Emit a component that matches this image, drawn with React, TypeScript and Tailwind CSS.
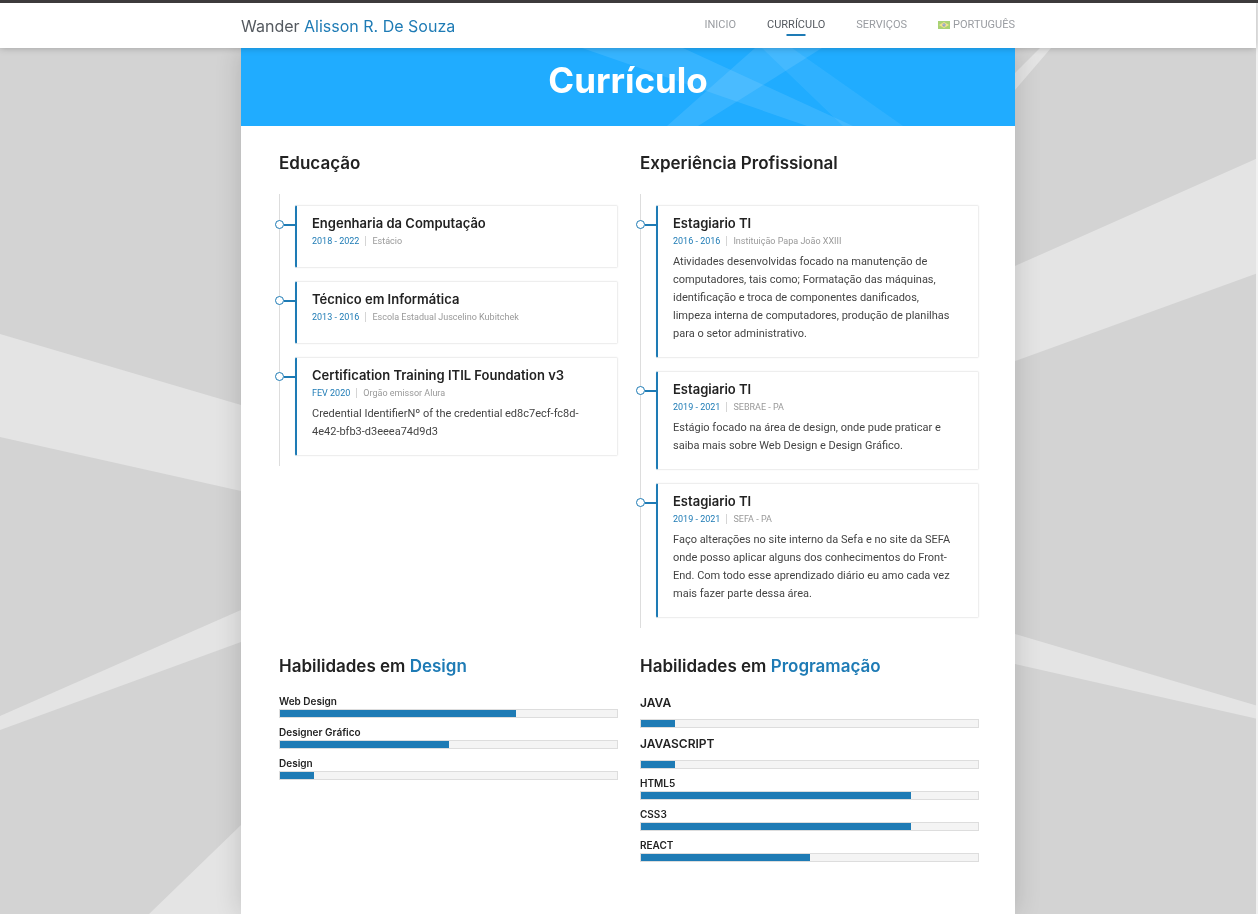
import type { ReactNode } from "react";

type Entry = { title: string; period: string; place: string; text?: string };
type Skill = { name: string; level: number; large?: boolean };

const education: Entry[] = [
  { title: "Engenharia da Computação", period: "2018 - 2022", place: "Estácio" },
  { title: "Técnico em Informática", period: "2013 - 2016", place: "Escola Estadual Juscelino Kubitchek" },
  {
    title: "Certification Training ITIL Foundation v3",
    period: "FEV 2020",
    place: "Orgão emissor Alura",
    text: "Credential IdentifierNº of the credential ed8c7ecf-fc8d-4e42-bfb3-d3eeea74d9d3",
  },
];

const experience: Entry[] = [
  {
    title: "Estagiario TI",
    period: "2016 - 2016",
    place: "Instituição Papa João XXIII",
    text: "Atividades desenvolvidas focado na manutenção de computadores, tais como; Formatação das máquinas, identificação e troca de componentes danificados, limpeza interna de computadores, produção de planilhas para o setor administrativo.",
  },
  {
    title: "Estagiario TI",
    period: "2019 - 2021",
    place: "SEBRAE - PA",
    text: "Estágio focado na área de design, onde pude praticar e saiba mais sobre Web Design e Design Gráfico.",
  },
  {
    title: "Estagiario TI",
    period: "2019 - 2021",
    place: "SEFA - PA",
    text: "Faço alterações no site interno da Sefa e no site da SEFA onde posso aplicar alguns dos conhecimentos do Front-End. Com todo esse aprendizado diário eu amo cada vez mais fazer parte dessa área.",
  },
];

const designSkills: Skill[] = [
  { name: "Web Design", level: 70 },
  { name: "Designer Gráfico", level: 50 },
  { name: "Design", level: 10 },
];

const codeSkills: Skill[] = [
  { name: "JAVA", level: 10, large: true },
  { name: "JAVASCRIPT", level: 10, large: true },
  { name: "HTML5", level: 80 },
  { name: "CSS3", level: 80 },
  { name: "REACT", level: 50 },
];

function Backdrop() {
  return (
    <svg
      className="fixed inset-0 -z-10 h-full w-full"
      viewBox="0 0 1258 914"
      preserveAspectRatio="none"
      aria-hidden="true"
    >
      <rect width="1258" height="914" fill="#d3d3d3" />
      <g fill="#e4e4e4">
        <polygon points="0,334 241,405 241,491 0,437" />
        <polygon points="0,716 241,610 241,642 0,730" />
        <polygon points="149,914 241,825 241,914" />
        <polygon points="1015,73 1040,48 1051,48 1015,90" />
        <polygon points="1015,266 1258,158 1258,273 1015,361" />
        <polygon points="1015,634 1258,706 1258,719 1015,664" />
      </g>
    </svg>
  );
}

function BrazilFlag() {
  return (
    <svg className="h-2 w-3" viewBox="0 0 12 8" aria-hidden="true">
      <rect width="12" height="8" fill="#a9d275" />
      <path d="M6 1 11 4 6 7 1 4Z" fill="#f3e48c" />
      <circle cx="6" cy="4" r="1.7" fill="#8f9fc0" />
      <path d="M4.5 3.6Q6 3.2 7.5 4.5" stroke="#e3e8ee" strokeWidth=".4" fill="none" />
    </svg>
  );
}

function Heading({ children }: { children: ReactNode }) {
  return <h2 className="font-[Inter,sans-serif] text-[17px] leading-6 font-semibold text-[#222]">{children}</h2>;
}

function Timeline({ title, entries }: { title: string; entries: Entry[] }) {
  return (
    <section>
      <Heading>{title}</Heading>
      <ol className="mt-[19px] flex flex-col gap-[13px] border-l border-[#ddd] pt-[11px] pb-[10px] pl-[15px]">
        {entries.map((e) => (
          <li
            key={e.period + e.place}
            className="relative rounded-[2px] border border-l-2 border-[#eee] border-l-[#1e7bb5] pt-[7px] pr-5 pb-[14px] pl-[15px] shadow-[0_0_2px_rgba(0,0,0,0.06)]"
          >
            <span className="absolute top-[14px] -left-[22px] flex items-center" aria-hidden="true">
              <span className="size-[9px] rounded-full border border-[#1e7bb5] bg-white" />
              <span className="h-[2px] w-[11px] bg-[#1e7bb5]" />
            </span>
            <h3 className="font-[Inter,sans-serif] text-[13px] leading-5 font-semibold text-[#222]">{e.title}</h3>
            <p className="mt-px flex h-[14px] items-center text-[9px] leading-[14px]">
              <span className="text-[#1e7bb5]">{e.period}</span>
              <span className="mx-[6px] h-[10px] w-px bg-[#d5d5d5]" />
              <span className="text-[#999]">{e.place}</span>
            </p>
            <p className="mt-[5px] text-[11px] leading-[18px] text-[#444]">{e.text}</p>
          </li>
        ))}
      </ol>
    </section>
  );
}

function Skills({ topic, skills }: { topic: string; skills: Skill[] }) {
  return (
    <section>
      <Heading>
        Habilidades em <span className="text-[#1e7bb5]">{topic}</span>
      </Heading>
      <ul className="mt-[17px] flex flex-col gap-2">
        {skills.map((s) => (
          <li key={s.name}>
            <h3
              className={
                s.large
                  ? "mb-2 font-[Inter,sans-serif] text-xs leading-4 font-semibold text-[#222]"
                  : "mb-[2px] font-[Inter,sans-serif] text-[10px] leading-3 font-semibold text-[#222]"
              }
            >
              {s.name}
            </h3>
            <div
              role="progressbar"
              aria-label={s.name}
              aria-valuenow={s.level}
              className="h-[9px] border border-[#ddd] bg-[#f4f4f4]"
            >
              <div className="h-full bg-[#1e7bb5]" style={{ width: `${s.level}%` }} />
            </div>
          </li>
        ))}
      </ul>
    </section>
  );
}

export default function App() {
  return (
    <div className="relative isolate flex min-h-screen flex-col font-[Roboto,sans-serif]">
      <Backdrop />
      <div className="relative z-20 h-[3px] bg-[#3d3b3c]" />
      <div className="flex grow flex-col border-r-2 border-[#f1f1f1]">
        <header className="relative z-10 bg-white shadow-[0_0_7px_rgba(0,0,0,0.25)]">
          <div className="mx-auto flex h-[45px] max-w-[774px] items-center justify-between">
            <a href="#inicio" className="font-[Inter,sans-serif] text-base leading-6 text-[#54595f]">
              Wander <span className="text-[#1e7bb5]">Alisson R. De Souza</span>
            </a>
            <nav className="flex items-center gap-[31px] pb-px text-[11px] leading-4 text-[#999ca1]">
              <a href="#inicio">INICIO</a>
              <a href="#curriculo" aria-current="page" className="relative text-[#54595f]">
                CURRÍCULO
                <span className="absolute top-[17px] left-1/2 h-[2px] w-[19px] -translate-x-1/2 bg-[#1e7bb5]" />
              </a>
              <a href="#servicos">SERVIÇOS</a>
              <a href="#idioma" className="flex items-center gap-[3px]">
                <BrazilFlag />
                PORTUGUÊS
              </a>
            </nav>
          </div>
        </header>
        <main className="mx-auto w-full max-w-[774px] grow bg-white shadow-[0_0_25px_rgba(0,0,0,0.16)]">
          <div className="relative flex h-[78px] justify-center bg-[#20acff] pt-3">
            <svg
              className="absolute inset-0 h-full w-full"
              viewBox="0 0 774 78"
              preserveAspectRatio="none"
              aria-hidden="true"
            >
              <g fill="#fff" fillOpacity=".1">
                <polygon points="341,0 442,0 612,78 566,78" />
                <polygon points="426,78 514,0 581,0 457,78" />
                <polygon points="521,0 551,0 662,78 602,78" fillOpacity=".07" />
              </g>
            </svg>
            <h1 className="relative font-[Inter,sans-serif] text-[35px] leading-10 font-bold text-white">Currículo</h1>
          </div>
          <div className="grid grid-cols-1 gap-x-[22px] gap-y-[26px] pt-[25px] pr-9 pb-10 pl-[38px] sm:grid-cols-2">
            <Timeline title="Educação" entries={education} />
            <Timeline title="Experiência Profissional" entries={experience} />
            <Skills topic="Design" skills={designSkills} />
            <Skills topic="Programação" skills={codeSkills} />
          </div>
        </main>
      </div>
    </div>
  );
}
